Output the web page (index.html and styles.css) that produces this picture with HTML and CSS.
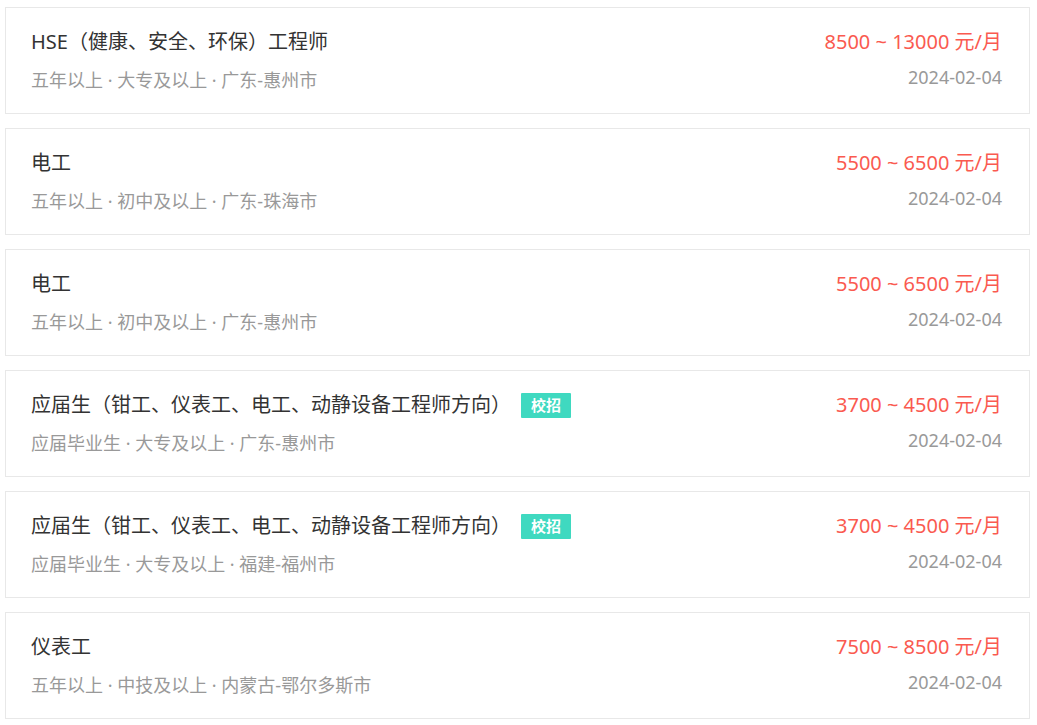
FILE: index.html
```html
<!DOCTYPE html>
<html lang="zh-CN">
<head>
<meta charset="utf-8">
<title>职位列表</title>
<link rel="stylesheet" href="styles.css">
</head>
<body>
<div class="list">
  <div class="job">
    <div class="main">
      <div class="title"><span class="name">HSE（健康、安全、环保）工程师</span></div>
      <div class="meta">五年以上 · 大专及以上 · 广东-惠州市</div>
    </div>
    <div class="side">
      <div class="salary">8500 ~ 13000 元/月</div>
      <div class="date">2024-02-04</div>
    </div>
  </div>
  <div class="job">
    <div class="main">
      <div class="title"><span class="name">电工</span></div>
      <div class="meta">五年以上 · 初中及以上 · 广东-珠海市</div>
    </div>
    <div class="side">
      <div class="salary">5500 ~ 6500 元/月</div>
      <div class="date">2024-02-04</div>
    </div>
  </div>
  <div class="job">
    <div class="main">
      <div class="title"><span class="name">电工</span></div>
      <div class="meta">五年以上 · 初中及以上 · 广东-惠州市</div>
    </div>
    <div class="side">
      <div class="salary">5500 ~ 6500 元/月</div>
      <div class="date">2024-02-04</div>
    </div>
  </div>
  <div class="job">
    <div class="main">
      <div class="title"><span class="name">应届生（钳工、仪表工、电工、动静设备工程师方向）</span><span class="tag">校招</span></div>
      <div class="meta">应届毕业生 · 大专及以上 · 广东-惠州市</div>
    </div>
    <div class="side">
      <div class="salary">3700 ~ 4500 元/月</div>
      <div class="date">2024-02-04</div>
    </div>
  </div>
  <div class="job">
    <div class="main">
      <div class="title"><span class="name">应届生（钳工、仪表工、电工、动静设备工程师方向）</span><span class="tag">校招</span></div>
      <div class="meta">应届毕业生 · 大专及以上 · 福建-福州市</div>
    </div>
    <div class="side">
      <div class="salary">3700 ~ 4500 元/月</div>
      <div class="date">2024-02-04</div>
    </div>
  </div>
  <div class="job">
    <div class="main">
      <div class="title"><span class="name">仪表工</span></div>
      <div class="meta">五年以上 · 中技及以上 · 内蒙古-鄂尔多斯市</div>
    </div>
    <div class="side">
      <div class="salary">7500 ~ 8500 元/月</div>
      <div class="date">2024-02-04</div>
    </div>
  </div>
</div>
</body>
</html>
```

FILE: styles.css
```css
html, body {
  margin: 0;
  padding: 0;
  background: #ffffff;
}
body {
  font-family: "Noto Sans", "Noto Sans CJK SC", sans-serif;
}
.list {
  display: flex;
  flex-direction: column;
  gap: 14px;
  padding: 7px 7px 0 5px;
}
.job {
  box-sizing: border-box;
  height: 107px;
  border: 1px solid #e8e8e8;
  padding: 20px 27px 0 25px;
  display: flex;
  justify-content: space-between;
  background: #fff;
}
.main {
  display: flex;
  flex-direction: column;
}
.title {
  display: flex;
  align-items: center;
  height: 28px;
  font-size: 20px;
  line-height: 28px;
  color: #333333;
}
.tag {
  margin-left: 10px;
  height: 25px;
  line-height: 25px;
  padding: 0 10px;
  background: #3fd9c0;
  color: #ffffff;
  font-size: 15px;
  font-weight: bold;
  border-radius: 1px;
}
.meta {
  margin-top: 12px;
  font-size: 18px;
  line-height: 24px;
  color: #999999;
}
.side {
  display: flex;
  flex-direction: column;
  align-items: flex-end;
}
.salary {
  font-size: 20px;
  line-height: 28px;
  color: #fa5a50;
}
.date {
  margin-top: 9px;
  font-size: 18px;
  line-height: 24px;
  color: #999999;
}
```
